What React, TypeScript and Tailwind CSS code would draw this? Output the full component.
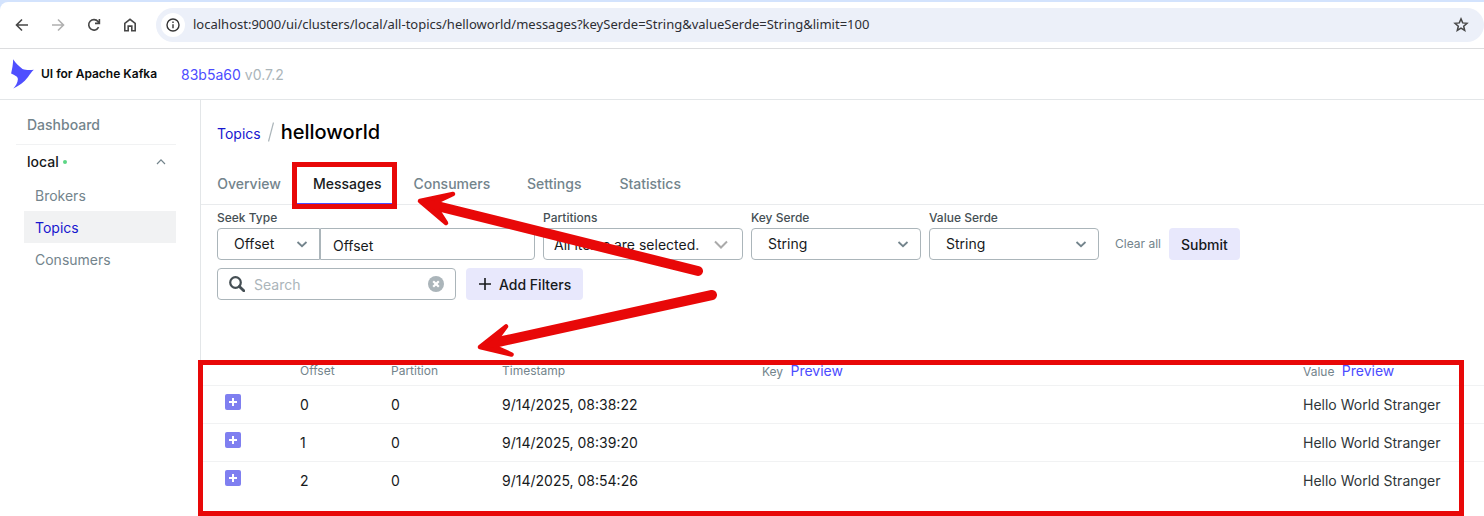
import type { ReactNode } from "react";

const ANNOTATION = "#e80808";

const tabs = ["Overview", "Messages", "Consumers", "Settings", "Statistics"];

const messages = [
  { offset: 0, partition: 0, timestamp: "9/14/2025, 08:38:22", value: "Hello World Stranger" },
  { offset: 1, partition: 0, timestamp: "9/14/2025, 08:39:20", value: "Hello World Stranger" },
  { offset: 2, partition: 0, timestamp: "9/14/2025, 08:54:26", value: "Hello World Stranger" },
];

function NavButton({ label, className, children }: { label: string; className: string; children: ReactNode }) {
  return (
    <button type="button" aria-label={label} className={`flex size-5 items-center justify-center ${className}`}>
      <svg viewBox="0 0 20 20" className="size-5" fill="none" stroke="currentColor" strokeWidth="1.6">
        {children}
      </svg>
    </button>
  );
}

function BrowserBar() {
  return (
    <div className="bg-[#d3e3fd] pt-0.5">
      <div className="flex h-[47px] items-center rounded-tl-lg border-b border-[#dcdddf] bg-white pl-3">
        <div className="flex gap-4">
          <NavButton label="Back" className="text-[#474747]">
            <path d="M16 10H5M10 4.5 4.5 10l5.500 5.500" />
          </NavButton>
          <NavButton label="Forward" className="text-[#b0b0b0]">
            <path d="M4 10h11M10 4.500 15.500 10 10 15.500" />
          </NavButton>
          <NavButton label="Reload" className="text-[#474747]">
            <path d="M14.600 12.200A5.200 5.200 0 1 1 14 6.600l1.300 1.600M15.400 4v4.400H11" />
          </NavButton>
          <NavButton label="Home" className="text-[#474747]">
            <path d="M4.800 15.700V8.300L10 4.300l5.200 4v7.400h-3.400v-4.600H8.200v4.600z" />
          </NavButton>
        </div>
        <div className="ml-4 flex h-[34px] flex-1 items-center rounded-full bg-[#ecf0f9] pr-[13px] pl-[5px]">
          <button type="button" aria-label="Site information" className="flex size-6 items-center justify-center rounded-full bg-white text-[#333]">
            <svg viewBox="0 0 16 16" className="size-4" fill="none" stroke="currentColor" strokeWidth="1.400">
              <circle cx="8" cy="8" r="6" />
              <path d="M8 7.200v4M8 4.600v1.500" />
            </svg>
          </button>
          <input
            aria-label="Address"
            className="ml-2 min-w-0 flex-1 bg-transparent font-['Noto_Sans',sans-serif] text-[13px] text-[#2c2e33] outline-none"
            defaultValue="localhost:9000/ui/clusters/local/all-topics/helloworld/messages?keySerde=String&valueSerde=String&limit=100"
          />
          <button type="button" aria-label="Bookmark" className="text-[#474747]">
            <svg viewBox="0 0 20 20" className="size-5" fill="none" stroke="currentColor" strokeWidth="1.500">
              <path d="m10 3.900 1.700 4 4.300.4-3.300 2.900 1 4.300-3.700-2.300-3.700 2.300 1-4.300L4 8.300l4.300-.4z" />
            </svg>
          </button>
        </div>
      </div>
    </div>
  );
}

function Header() {
  return (
    <header className="flex h-[51px] items-center border-b border-[#e3e6e8] pl-[11px]">
      <a href="#home" className="flex items-center gap-[7px]">
        <svg viewBox="0 0 23 30" className="h-[30px] w-[23px]" fill="#4f4fff">
          <path d="M2.200.3C4.400 4 8 7.500 11.500 9.900c3.400 1.400 7.300 1.200 11.400.8-2.400 2-4 4.600-5.900 7.400C13 23.500 8 26.800 2.300 29.500c2.400-2.600 4.400-5.600 4.600-9.200-.1-1.500-.7-2.400-1.700-3.100-1.600-1.100-3.300-1.900-5.100-2.600C1.200 10 2 5.500 2.200.3z" />
        </svg>
        <span className="text-xs font-semibold text-[#0b0d0e]">UI for Apache Kafka</span>
      </a>
      <div className="ml-6 flex gap-1 pt-0.5 text-sm">
        <a href="#commit" className="text-[#4c4cff]">83b5a60</a>
        <span className="text-[#abb5ba]">v0.7.2</span>
      </div>
    </header>
  );
}

function Sidebar() {
  return (
    <aside className="w-[201px] shrink-0 border-r border-[#e3e6e8] pt-1.5 pr-6 pb-2 pl-4 text-sm text-[#73848c]">
      <nav>
        <a href="#dashboard" className="flex h-[39px] items-center border-b border-[#f1f2f3] pl-[11px] font-medium">Dashboard</a>
        <button type="button" className="flex h-[34px] w-full items-center pr-[9px] pl-[11px] font-medium text-[#171a1c]">
          local
          <span className="ml-1 size-1 rounded-full bg-[#5cd685]" />
          <svg viewBox="0 0 12 12" className="ml-auto size-3" fill="none" stroke="#73848c" strokeWidth="1.200">
            <path d="m2 8 4-4.200L10 8" />
          </svg>
        </button>
        <div className="ml-2">
          <a href="#brokers" className="flex h-8 items-center pt-0.5 pl-[11px]">Brokers</a>
          <a href="#topics" className="flex h-8 items-center bg-[#f1f2f3] pt-0.5 pl-[11px] text-[#1717cf]">Topics</a>
          <a href="#consumers" className="flex h-8 items-center pt-0.5 pl-[11px]">Consumers</a>
        </div>
      </nav>
    </aside>
  );
}

function Tabs() {
  return (
    <nav className="flex h-[41px] border-b border-[#e9ebed] text-sm font-medium">
      {tabs.map((tab) =>
        tab === "Messages" ? (
          <a
            key={tab}
            href="#messages"
            aria-current="page"
            className="relative flex min-w-24 items-center justify-center border-b border-[#4c4cff] px-4 text-[#171a1c]"
          >
            {tab}
            <span className="pointer-events-none absolute -top-0.5 right-0 -bottom-1.5 -left-[5px] border-[5px] border-[#e80808]" />
          </a>
        ) : (
          <a key={tab} href={`#${tab.toLowerCase()}`} className="flex min-w-24 items-center justify-center px-4 text-[#73848c]">
            {tab}
          </a>
        ),
      )}
    </nav>
  );
}

function SelectBox({ id, option, className }: { id: string; option: string; className: string }) {
  return (
    <div className={`relative h-8 ${className}`}>
      <select id={id} className="size-full appearance-none rounded-[inherit] border border-[#abb5ba] bg-white px-4 text-sm text-[#171a1c]">
        <option>{option}</option>
      </select>
      <svg viewBox="0 0 12 12" className="pointer-events-none absolute top-2.5 right-3 size-3" fill="none" stroke="#73848c" strokeWidth="1.800">
        <path d="m1.500 4 4.500 4.200L10.500 4" />
      </svg>
    </div>
  );
}

function Field({ id, label, children }: { id: string; label: string; children: ReactNode }) {
  return (
    <div>
      <label htmlFor={id} className="mb-0.5 block text-xs leading-4 font-medium text-[#454f54]">{label}</label>
      {children}
    </div>
  );
}

function Filters() {
  return (
    <div className="px-4 pt-[5px] text-sm">
      <div className="flex items-end gap-2">
        <Field id="seek-type" label="Seek Type">
          <div className="flex">
            <SelectBox id="seek-type" option="Offset" className="w-[103px] rounded-l" />
            <input aria-label="Offset" defaultValue="Offset" className="h-8 w-[215px] rounded-r border border-[#abb5ba] px-3 pt-0.5 text-[#171a1c]" />
          </div>
        </Field>
        <Field id="partitions" label="Partitions">
          <div className="relative h-8 w-[200px]">
            <select id="partitions" className="size-full appearance-none rounded border border-[#abb5ba] bg-white px-2.5 pt-0.5 text-sm text-[#171a1c]">
              <option>All items are selected.</option>
            </select>
            <svg viewBox="0 0 16 16" className="pointer-events-none absolute top-2 right-3.5 size-4" fill="none" stroke="#aaa" strokeWidth="2">
              <path d="m2 5.500 6 6 6-6" />
            </svg>
          </div>
        </Field>
        <Field id="key-serde" label="Key Serde">
          <SelectBox id="key-serde" option="String" className="w-[170px] rounded" />
        </Field>
        <Field id="value-serde" label="Value Serde">
          <SelectBox id="value-serde" option="String" className="w-[170px] rounded" />
        </Field>
        <button type="button" className="ml-2 h-8 text-xs text-[#73848c]">Clear all</button>
        <button type="submit" className="h-8 rounded bg-[#e8e8fc] px-3 pt-0.5 font-medium text-[#171a1c]">Submit</button>
      </div>
      <div className="mt-2 flex gap-2.5">
        <div className="flex h-8 w-[239px] items-center rounded border border-[#abb5ba] px-[11px]">
          <svg viewBox="0 0 16 16" className="size-4 shrink-0" fill="none" stroke="#454f54">
            <circle cx="6.500" cy="6.500" r="5.300" strokeWidth="2.200" />
            <path d="m10.400 10.400 4.400 4.400" strokeWidth="2.800" strokeLinecap="round" />
          </svg>
          <input aria-label="Search" placeholder="Search" className="ml-[9px] min-w-0 flex-1 pt-0.5 outline-none placeholder:text-[#abb5ba]" />
          <button type="button" aria-label="Clear search">
            <svg viewBox="0 0 16 16" className="size-4">
              <circle cx="8" cy="8" r="8" fill="#abb5ba" />
              <path d="m5.200 5.200 5.600 5.600M10.800 5.200l-5.600 5.600" stroke="#fff" strokeWidth="2.200" />
            </svg>
          </button>
        </div>
        <button type="button" className="flex h-8 items-center gap-[7px] rounded bg-[#e8e8fc] px-3 font-medium text-[#171a1c]">
          <svg viewBox="0 0 14 14" className="size-3.5" fill="none" stroke="#171a1c" strokeWidth="1.600">
            <path d="M7 1v12M1 7h12" />
          </svg>
          <span className="pt-0.5">Add Filters</span>
        </button>
      </div>
    </div>
  );
}

function MessagesTable() {
  return (
    <div className="relative mt-[60px] pb-[17px]">
      <table className="w-full table-fixed border-collapse text-left text-sm text-[#171a1c]">
        <colgroup>
          <col className="w-[91px]" />
          <col className="w-[91px]" />
          <col className="w-[111px]" />
          <col className="w-[260px]" />
          <col />
          <col className="w-[189px]" />
        </colgroup>
        <thead>
          <tr className="h-[25px] border-b border-[#f1f2f3] text-xs text-[#73848c]">
            <th aria-label="Expand" />
            <th className="px-2 pb-0.5 font-normal">Offset</th>
            <th className="px-2 pb-0.5 font-normal">Partition</th>
            <th className="px-2 pb-0.5 font-normal">Timestamp</th>
            <th className="px-2 pb-0.5 font-normal">
              Key <button type="button" className="ml-1 text-sm leading-5 text-[#4c4cff]">Preview</button>
            </th>
            <th className="px-2 pb-0.5 font-normal">
              Value <button type="button" className="ml-1 text-sm leading-5 text-[#4c4cff]">Preview</button>
            </th>
          </tr>
        </thead>
        <tbody>
          {messages.map((message) => (
            <tr key={message.offset} className="h-[38px] border-b border-[#f1f2f3] last:border-b-0">
              <td className="pt-2 pl-6 align-top">
                <button type="button" aria-label={`Expand message ${message.offset}`} className="block">
                  <svg viewBox="0 0 16 16" className="size-4">
                    <rect width="16" height="16" rx="2" fill="#7f7ff0" />
                    <path d="M8 4v8M4 8h8" stroke="#fff" strokeWidth="2" />
                  </svg>
                </button>
              </td>
              <td className="px-2 pt-0.5">{message.offset}</td>
              <td className="px-2 pt-0.5">{message.partition}</td>
              <td className="px-2 pt-0.5">{message.timestamp}</td>
              <td className="px-2 pt-0.5" />
              <td className="px-2 pt-0.5 text-[#2f3639]">{message.value}</td>
            </tr>
          ))}
        </tbody>
      </table>
      <div className="pointer-events-none absolute top-0 right-5 bottom-0 -left-[3px] border-[5px] border-[#e80808]" />
    </div>
  );
}

function Arrows() {
  return (
    <svg
      viewBox="0 0 310 170"
      className="pointer-events-none absolute top-[90px] left-[209px] h-[170px] w-[310px]"
      fill={ANNOTATION}
      stroke={ANNOTATION}
      strokeLinecap="round"
      strokeLinejoin="round"
    >
      <path d="m25 15.500 263 65.500" strokeWidth="10" fill="none" />
      <path d="M10 11 43 4 27 11.500V19l9 14z" strokeWidth="4.500" />
      <path d="M302 105 88 152" strokeWidth="10" fill="none" />
      <path d="M70 157 96 136.500 86 150v7.500l15.500 7z" strokeWidth="4.500" />
    </svg>
  );
}

export default function App() {
  return (
    <div className="min-h-screen bg-white font-['Inter',sans-serif]">
      <BrowserBar />
      <Header />
      <div className="flex">
        <Sidebar />
        <main className="relative min-w-0 flex-1">
          <div className="flex h-16 items-center gap-[7px] px-4">
            <a href="#topics" className="pt-1 text-sm text-[#1717cf]">Topics</a>
            <svg viewBox="0 0 6 20" className="h-5 w-1.5" stroke="#abb5ba" strokeWidth="1.200">
              <path d="M5.500.5.500 19.500" />
            </svg>
            <h1 className="text-xl font-medium text-black">helloworld</h1>
          </div>
          <Tabs />
          <Filters />
          <MessagesTable />
          <Arrows />
        </main>
      </div>
    </div>
  );
}
